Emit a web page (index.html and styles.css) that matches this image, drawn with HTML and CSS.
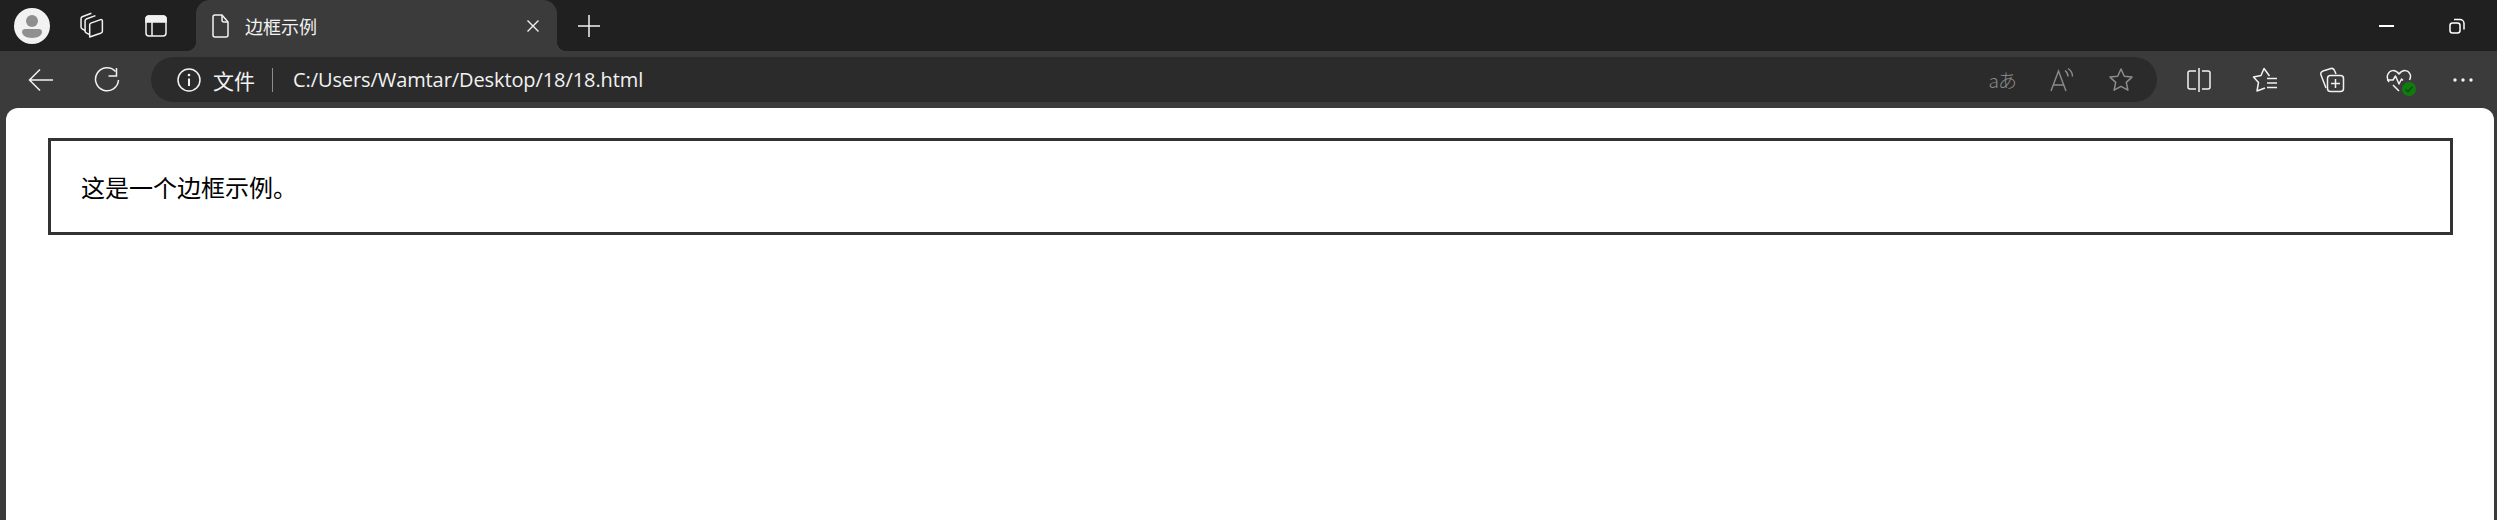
FILE: index.html
```html
<!DOCTYPE html>
<html lang="zh-CN">
<head>
  <meta charset="UTF-8" />
  <title>边框示例</title>
  <link rel="stylesheet" href="styles.css">
</head>
<body>

  <div class="tabstrip">
    <div class="slot avatar-slot">
      <svg width="36" height="36" viewBox="0 0 36 36">
        <circle cx="18" cy="18" r="18" fill="#f2f2f2"/>
        <circle cx="18" cy="13" r="6" fill="#8f8f8f"/>
        <path d="M8 24c0-2 1.500-3 3-3h14c1.500 0 3 1 3 3 0 3-4 6-10 6s-10-3-10-6z" fill="#8f8f8f"/>
      </svg>
    </div>
    <div class="slot">
      <svg width="30" height="30" viewBox="0 0 26 26" fill="none" stroke="#f2f2f2" stroke-width="1.300" stroke-linejoin="round">
        <path d="M11 22.500l10-3.500c.7-.3 1-.8 1-1.500V8.500c0-.8-.7-1.300-1.500-1L12 10.500c-.7.300-1 .8-1 1.500v9.500c0 .8 0 1 0 1z"/>
        <path d="M11 20.500l-3-1.500c-.7-.4-1-1-1-1.700V8.500c0-.7.300-1.200 1-1.500l8-3"/>
        <path d="M7 17l-2.500-1.500c-.7-.4-1-1-1-1.700V6.500c0-.7.300-1.200 1-1.500l8-3"/>
      </svg>
    </div>
    <div class="slot slot-wide">
      <svg width="24" height="24" viewBox="0 0 24 24" fill="none" stroke="#f2f2f2" stroke-width="1.500">
        <rect x="2" y="2" width="20" height="20" rx="3"/>
        <path d="M2 5a3 3 0 0 1 3-3h14a3 3 0 0 1 3 3v3H2z" fill="#f2f2f2"/>
        <path d="M8 8v14"/>
      </svg>
    </div>
    <div class="tab">
      <svg class="tab-file" width="24" height="26" viewBox="0 0 24 26" fill="none" stroke="#f2f2f2" stroke-width="1.500" stroke-linejoin="round">
        <path d="M7 2h7l6 7v13a2 2 0 0 1-2 2H7a2 2 0 0 1-2-2V4a2 2 0 0 1 2-2z"/>
        <path d="M14 2v5a2 2 0 0 0 2 2h4"/>
      </svg>
      <span class="tab-title">边框示例</span>
      <svg class="tab-close" width="14" height="14" viewBox="0 0 14 14" stroke="#f2f2f2" stroke-width="1.400">
        <path d="M1.500 1.500l11 11M12.500 1.500l-11 11"/>
      </svg>
    </div>
    <div class="slot new-tab">
      <svg width="22" height="22" viewBox="0 0 22 22" stroke="#f2f2f2" stroke-width="1.500">
        <path d="M11 0v22M0 11h22"/>
      </svg>
    </div>
    <div class="window-btns">
      <svg width="16" height="16" viewBox="0 0 16 16" stroke="#fff" stroke-width="2">
        <path d="M0 8h15"/>
      </svg>
      <svg width="16" height="16" viewBox="0 0 16 16" fill="none" stroke="#fff" stroke-width="1.500">
        <rect x="1" y="5" width="10" height="10" rx="2.500"/>
        <path d="M5 1.500h6a4 4 0 0 1 4 4v6"/>
      </svg>
    </div>
  </div>

  <div class="toolbar">
    <div class="nav-btn">
      <svg width="26" height="24" viewBox="0 0 26 24" fill="none" stroke="#f2f2f2" stroke-width="1.500">
        <path d="M25 12H2M12 1.500L1.500 12 12 22.500"/>
      </svg>
    </div>
    <div class="nav-btn">
      <svg width="26" height="26" viewBox="0 0 26 26" fill="none" stroke="#f2f2f2" stroke-width="1.500">
        <path d="M21.500 4.500A11.500 11.500 0 1 0 24.500 13"/>
        <path d="M22.500 1v8h-8"/>
      </svg>
    </div>
    <div class="addressbar">
      <svg width="24" height="24" viewBox="0 0 24 24" fill="none" stroke="#f2f2f2" stroke-width="1.500">
        <circle cx="12" cy="12" r="11"/>
        <path d="M12 10.500V18" stroke-width="2"/>
        <circle cx="12" cy="7" r="1.300" fill="#f2f2f2" stroke="none"/>
      </svg>
      <span class="scheme">文件</span>
      <span class="divider"></span>
      <span class="url">C:/Users/Wamtar/Desktop/18/18.html</span>
      <div class="bar-icons">
        <span class="translate">aあ</span>
        <svg width="26" height="26" viewBox="0 0 26 26" fill="none" stroke="#8c8c8c" stroke-width="1.400">
          <path d="M2 24L9.500 4 17 24M4.500 18h10"/>
          <path d="M16 3.500c2 1.500 3 3.500 3 6M19 1.500c3 2 4.500 5 4.500 8"/>
        </svg>
        <svg width="26" height="26" viewBox="0 0 26 26" fill="none" stroke="#8c8c8c" stroke-width="1.500" stroke-linejoin="round">
          <path d="M13 2l3.300 7.200 7.700.9-5.700 5.300 1.600 7.800L13 19.300l-6.900 3.900 1.600-7.800L2 10.100l7.700-.9z"/>
        </svg>
      </div>
    </div>
    <div class="tool-icons">
      <svg width="24" height="26" viewBox="0 0 24 26" fill="none" stroke="#f2f2f2" stroke-width="1.500">
        <path d="M9 4H3a2 2 0 0 0-2 2v14a2 2 0 0 0 2 2h6M15 4h6a2 2 0 0 1 2 2v14a2 2 0 0 1-2 2h-6M12 1v24"/>
      </svg>
      <svg width="26" height="26" viewBox="0 0 26 26" fill="none" stroke="#f2f2f2" stroke-width="1.500" stroke-linejoin="round">
        <path d="M17.500 9L12 1.500 9 8.500 1.500 10l5 5.500L5 24l8-3"/>
        <path d="M15 11.500h10M15 16h10M15 20.500h10"/>
      </svg>
      <svg width="26" height="26" viewBox="0 0 26 26" fill="none" stroke="#f2f2f2" stroke-width="1.500">
        <path d="M7 21L2 8a3 3 0 0 1 2-4l8-2.500c2-.5 3 .5 3.500 2L17 7"/>
        <rect x="8.500" y="8.500" width="16" height="16" rx="3"/>
        <path d="M16.500 12v9M12 16.500h9"/>
      </svg>
      <div class="health">
        <svg width="26" height="26" viewBox="0 0 26 26" fill="none" stroke="#f2f2f2" stroke-width="1.500" stroke-linejoin="round">
          <path d="M3 15C1 12 1 9 2 7c2-4 7-5 11 0 4-5 9-4 11 0 1 2 .5 4-.5 6M7 18l6 6"/>
          <path d="M1 13h6l2.500-4 3.500 8 2.500-5 1.500 1.500"/>
        </svg>
        <svg class="health-badge" width="14" height="14" viewBox="0 0 14 14">
          <circle cx="7" cy="7" r="7" fill="#107c10"/>
          <path d="M3.500 7.300l2.400 2.400 4.600-5" fill="none" stroke="#0b4f0b" stroke-width="1.600"/>
        </svg>
      </div>
      <svg width="20" height="6" viewBox="0 0 20 6" fill="#f2f2f2">
        <circle cx="2" cy="3" r="1.700"/>
        <circle cx="10" cy="3" r="1.700"/>
        <circle cx="18" cy="3" r="1.700"/>
      </svg>
    </div>
  </div>

  <div class="page">
    <div class="bordered">
      <p>这是一个边框示例。</p>
    </div>
  </div>

</body>
</html>
```

FILE: styles.css
```css
* { margin: 0; padding: 0; box-sizing: border-box; }
html, body { height: 100%; }
body {
  background: #3b3b3b;
  display: flex;
  flex-direction: column;
  overflow: hidden;
  font-family: "Open Sans", "Noto Sans CJK SC", sans-serif;
}
.tabstrip {
  height: 51px;
  flex: none;
  background: #202020;
  display: flex;
  align-items: center;
  padding-left: 8px;
}
.slot {
  width: 48px;
  height: 36px;
  display: flex;
  align-items: center;
  justify-content: center;
  margin-right: 12px;
}
.slot-wide { margin-left: 4px; margin-right: 16px; }
.tab {
  width: 361px;
  height: 51px;
  align-self: flex-end;
  flex: none;
  background: #3b3b3b;
  border-radius: 14px 14px 0 0;
  display: flex;
  align-items: center;
  padding-left: 12px;
  position: relative;
}
.tab::before, .tab::after {
  content: "";
  position: absolute;
  bottom: 0;
  width: 10px;
  height: 10px;
}
.tab::before {
  left: -10px;
  background: radial-gradient(circle at 0 0, transparent 10px, #3b3b3b 10.500px);
}
.tab::after {
  right: -10px;
  background: radial-gradient(circle at 100% 0, transparent 10px, #3b3b3b 10.500px);
}
.tab-title {
  font-family: "Noto Sans CJK SC", sans-serif;
  font-size: 18px;
  color: #f2f2f2;
  margin-left: 13px;
}
.tab-close { margin-left: auto; margin-right: 17px; }
.new-tab { margin-left: 8px; }
.window-btns {
  margin-left: auto;
  display: flex;
  align-items: center;
  gap: 54px;
  padding-right: 32px;
}
.toolbar {
  height: 57px;
  flex: none;
  display: flex;
  align-items: center;
  padding-left: 8px;
}
.nav-btn {
  width: 66px;
  display: flex;
  justify-content: center;
}
.addressbar {
  width: 2006px;
  height: 45px;
  margin-left: 11px;
  flex: none;
  background: #2b2b2b;
  border-radius: 23px;
  display: flex;
  align-items: center;
  padding-left: 26px;
  color: #f2f2f2;
}
.scheme {
  font-family: "Noto Sans CJK SC", sans-serif;
  font-size: 21px;
  margin-left: 12px;
}
.divider {
  width: 1px;
  height: 24px;
  background: #8c8c8c;
  margin: 0 20px 0 17px;
}
.url { font-size: 20px; letter-spacing: -0.09px; }
.bar-icons {
  margin-left: auto;
  display: flex;
  align-items: center;
  gap: 33px;
  padding-right: 23px;
}
.translate {
  font-family: "Noto Sans CJK JP", sans-serif;
  font-size: 19px;
  font-weight: 300;
  color: #8c8c8c;
  letter-spacing: -1px;
}
.tool-icons {
  display: flex;
  align-items: center;
  gap: 41px;
  margin-left: 30px;
}
.health { position: relative; height: 26px; }
.health-badge {
  position: absolute;
  right: -4px;
  bottom: -3px;
}
.page {
  flex: 1;
  background: #fff;
  margin: 0 3px 0 6px;
  border-radius: 12px 12px 0 0;
  padding: 30px 41px 0 42px;
}
.bordered {
  border: 3px solid #333;
  padding: 30px;
}
.bordered p {
  font-family: "Noto Sans CJK SC", sans-serif;
  font-size: 24px;
  line-height: 31px;
  color: #000;
}
```
